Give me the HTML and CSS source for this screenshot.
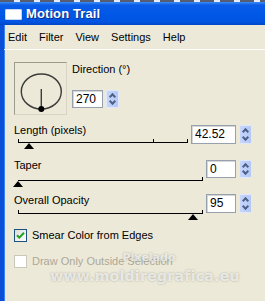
FILE: index.html
```html
<!DOCTYPE html>
<html lang="en">
<head>
    <meta charset="UTF-8">
    <title>Motion Trail</title>
    <link rel="stylesheet" href="styles.css">
</head>
<body>
    <div class="topStrip"></div>
    <div class="window">
        <div class="titleBar">
            <span class="titleIcon"></span>
            <span class="titleText">Motion Trail</span>
        </div>
        <div class="menuBar">
            <span>Edit</span>
            <span>Filter</span>
            <span>View</span>
            <span>Settings</span>
            <span>Help</span>
        </div>

        <div class="content">
            <div class="dirRow">
                <div class="dial">
                    <svg width="51" height="51" viewBox="0 0 51 51">
                        <ellipse cx="26.3" cy="28.5" rx="20" ry="17.5" fill="none" stroke="#3c3c3c" stroke-width="1.4"/>
                        <line x1="26.3" y1="26" x2="26.3" y2="46" stroke="#3c3c3c" stroke-width="1.4"/>
                        <circle cx="26.3" cy="46" r="3" fill="#000"/>
                    </svg>
                </div>
                <div class="dirCtrl">
                    <div class="label">Direction (°)</div>
                    <div class="field dirField">
                        <div class="numBox w31">270</div>
                        <div class="spin">
                            <span class="up"></span>
                            <span class="down"></span>
                        </div>
                    </div>
                </div>
            </div>

            <div class="sliderRow lengthRow">
                <div class="sliderCol">
                    <div class="label">Length (pixels)</div>
                    <div class="track short">
                        <i class="tick" style="left:0"></i>
                        <i class="tick" style="left:135px"></i>
                        <i class="tick" style="left:169px"></i>
                        <i class="thumb" style="left:6px"></i>
                    </div>
                </div>
                <div class="field">
                    <div class="numBox w45">42.52</div>
                    <div class="spin">
                        <span class="up"></span>
                        <span class="down"></span>
                    </div>
                </div>
            </div>

            <div class="sliderRow taperRow">
                <div class="sliderCol">
                    <div class="label">Taper</div>
                    <div class="track">
                        <i class="tick" style="left:184px"></i>
                        <i class="thumb" style="left:-5px"></i>
                    </div>
                </div>
                <div class="field">
                    <div class="numBox w30">0</div>
                    <div class="spin">
                        <span class="up"></span>
                        <span class="down"></span>
                    </div>
                </div>
            </div>

            <div class="sliderRow opacityRow">
                <div class="sliderCol">
                    <div class="label">Overall Opacity</div>
                    <div class="track">
                        <i class="tick" style="left:0"></i>
                        <i class="tick" style="left:184px"></i>
                        <i class="thumb" style="left:170px"></i>
                    </div>
                </div>
                <div class="field">
                    <div class="numBox w30">95</div>
                    <div class="spin">
                        <span class="up"></span>
                        <span class="down"></span>
                    </div>
                </div>
            </div>

            <label class="check smear">
                <span class="box checked">
                    <svg width="11" height="11" viewBox="0 0 11 11">
                        <path d="M2 5.2 L4.3 7.6 L9 2.8" fill="none" stroke="#21a121" stroke-width="2"/>
                    </svg>
                </span>
                <span>Smear Color from Edges</span>
            </label>

            <label class="check disabled">
                <span class="box"></span>
                <span>Draw Only Outside Selection</span>
            </label>
        </div>

        <div class="watermark">
            <div class="wm1">Pixelado</div>
            <div class="wm2">www.moldiregrafica.eu</div>
        </div>
    </div>
</body>
</html>
```

FILE: styles.css
```css
body{
    margin: 0;
    width: 265px;
    height: 301px;
    overflow: hidden;
    font-family: "Liberation Sans", Arial, sans-serif;
    font-size: 11px;
    color: #000;
}

.topStrip{
    height: 2px;
    background: repeating-linear-gradient(90deg, #2a3550 0 14px, #dfe7f5 14px 20px);
    opacity: 0.8;
}

.window{
    position: relative;
    height: 299px;
    background-color: #ece9d8;
    border-left: 4px solid #0a4fd8;
    box-shadow: inset 1px 0 0 #3b82f4;
}

.titleBar{
    height: 23px;
    margin-left: -4px;
    display: flex;
    align-items: center;
    background: linear-gradient(#3d8cf6 0, #0a5ce8 3px, #0058e6 12px, #0054e0 20px, #0046c4 23px);
}

.titleIcon{
    width: 15px;
    height: 9px;
    margin: 1px 4px 0 5px;
    background: #fff;
    border: 1px solid #c7d8f7;
    border-radius: 1px;
}

.titleText{
    color: #fff;
    font-weight: bold;
    font-size: 13px;
    letter-spacing: 0.1px;
    text-shadow: 1px 1px 0 #0a2e8a;
}

.menuBar{
    height: 24px;
    display: flex;
    align-items: center;
    gap: 12px;
    padding-left: 4px;
    border-bottom: 1px solid #fff;
}

.content{
    padding: 12px 0 0 10px;
    width: 238px;
}

.label{
    line-height: 14px;
    height: 14px;
}

.dirRow{
    display: flex;
    gap: 5px;
}

.dial{
    width: 51px;
    height: 51px;
    border: 1px solid;
    border-color: #9c9a8d #d8d5c6 #d8d5c6 #9c9a8d;
}

.dirCtrl{
    display: flex;
    flex-direction: column;
}

.dirField{
    margin-top: 14px;
}

.field{
    display: flex;
    gap: 3px;
    height: 18px;
}

.numBox{
    box-sizing: border-box;
    height: 18px;
    background: #fff;
    border: 1px solid #97a0ad;
    box-shadow: inset 1px 1px 0 #d6d6d6;
    font-size: 12px;
    line-height: 16px;
    padding-left: 3px;
}

.w30{ width: 30px; }
.w31{ width: 31px; }
.w45{ width: 45px; }

.spin{
    width: 13px;
    display: flex;
    flex-direction: column;
    border-radius: 2px;
    overflow: hidden;
    background: linear-gradient(90deg, #c6d5fb, #b4c8f6);
    border: 1px solid #dfe8fd;
    box-sizing: border-box;
}

.spin span{
    flex: 1;
    position: relative;
}

.spin span::after{
    content: "";
    position: absolute;
    left: 3px;
    width: 3px;
    height: 3px;
    border: solid #4d6185;
    border-width: 2px 2px 0 0;
}

.spin .up::after{
    top: 3px;
    transform: rotate(-45deg);
}

.spin .down::after{
    top: 0;
    transform: rotate(135deg);
}

.sliderRow{
    display: flex;
    justify-content: space-between;
    align-items: flex-start;
}

.sliderCol{
    flex: 1;
}

.track{
    position: relative;
    margin: 6px 0 0 4px;
    width: 185px;
    height: 1px;
    background: #000;
}

.track.short{
    width: 170px;
}

.tick{
    position: absolute;
    bottom: 0;
    width: 1px;
    height: 4px;
    background: #000;
}

.thumb{
    position: absolute;
    top: 1px;
    width: 0;
    height: 0;
    border-left: 5px solid transparent;
    border-right: 5px solid transparent;
    border-bottom: 6px solid #000;
}

.lengthRow{
    margin-top: 8px;
}

.lengthRow .track{
    margin-top: 5px;
}

.lengthRow .field{
    margin-top: 2px;
    height: 19px;
}

.lengthRow .numBox{
    height: 19px;
    line-height: 17px;
}

.taperRow{
    margin-top: 14px;
}

.taperRow .track{
    margin-top: 8px;
}

.taperRow .field{
    margin-top: 2px;
}

.opacityRow{
    margin-top: 12px;
}

.opacityRow .field{
    margin-top: 1px;
    height: 19px;
}

.opacityRow .numBox{
    height: 19px;
    line-height: 17px;
}

.check{
    display: flex;
    align-items: center;
    gap: 5px;
    height: 14px;
    font-size: 11px;
}

.smear{
    margin-top: 14px;
}

.disabled{
    margin-top: 12px;
    color: #aca899;
}

.box{
    box-sizing: border-box;
    width: 13px;
    height: 13px;
    border: 1px solid #1c5180;
    background: linear-gradient(135deg, #dcdcd7, #fff);
    display: flex;
    align-items: center;
    justify-content: center;
}

.disabled .box{
    border-color: #cac8bb;
    background: #fff;
}

.watermark{
    position: absolute;
    left: 46px;
    top: 249px;
    width: 190px;
    text-align: center;
    font-family: "DejaVu Sans", sans-serif;
    font-weight: bold;
    color: rgba(255, 255, 255, 0.7);
    text-shadow: 0 0 2px rgba(110, 110, 100, 0.55);
    pointer-events: none;
    line-height: 14px;
}

.wm1{
    font-size: 11px;
    margin-left: 8px;
}

.wm2{
    font-size: 14px;
    margin-top: 4px;
    letter-spacing: 0.3px;
}
```
